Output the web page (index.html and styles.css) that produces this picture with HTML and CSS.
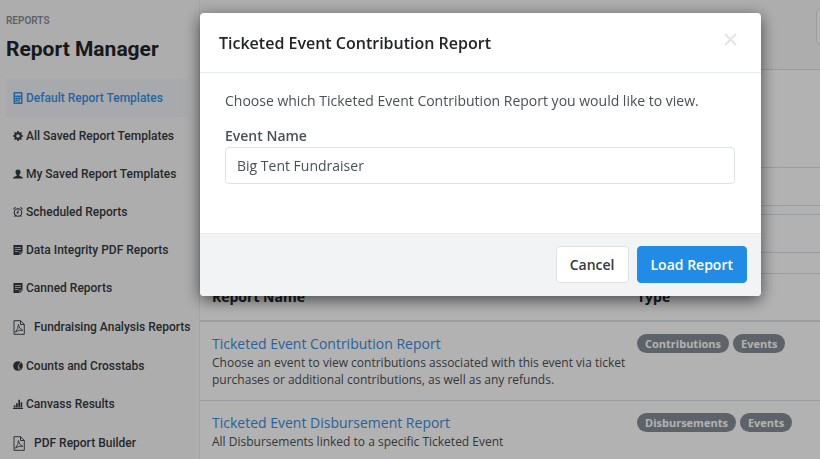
FILE: index.html
```html
<!DOCTYPE html>
<html lang="en">
<head>
    <meta charset="UTF-8">
    <meta name="viewport" content="width=device-width, initial-scale=1.0">
    <title>Report Manager</title>
    <link rel="stylesheet" href="styles.css">
</head>
<body>

    <svg class="sprite" aria-hidden="true">
        <symbol id="icon-pdf" viewBox="0 0 12 15">
            <path d="M1 .7h6.500l3.800 3.800v9.800H1z M7.500 .7v3.800h3.800" fill="none" stroke="currentColor" stroke-width=".9"/>
            <path d="M2.300 12.200Q5.500 9 5.400 4.500Q6 9 9.800 10.300Q6 9.500 2.300 12.200z" fill="none" stroke="currentColor" stroke-width=".8"/>
        </symbol>
        <symbol id="icon-note" viewBox="0 0 10 12">
            <path d="M.5 1h9v7.500L7 11H.5z"/>
            <path d="M2 3.500h6M2 5.500h6M2 7.500h3.500" stroke="#e8e8e8" stroke-width=".8"/>
            <path d="M6.800 11V8.300h2.700" fill="none" stroke="#e8e8e8" stroke-width=".6"/>
        </symbol>
    </svg>

    <div class="page">
        <aside class="sidebar">
            <p class="section">REPORTS</p>
            <h1>Report Manager</h1>
            <nav class="menu">
                <a href="#" class="active">
                    <svg class="icon" viewBox="0 0 10 12"><path fill-rule="evenodd" d="M1.500 0h7q1 0 1 1v10q0 1-1 1h-7q-1 0-1-1V1q0-1 1-1zM2 1.500v2h6v-2zM2 5v1h1.400V5zm2.300 0v1h1.400V5zm2.300 0v1H8V5zM2 7.300v1h1.400v-1zm2.300 0v1h1.400v-1zM2 9.500v1h3.700v-1zM6.600 7.300v3.200H8V7.300z"/></svg>
                    Default Report Templates
                </a>
                <a href="#">
                    <svg class="icon" viewBox="0 0 12 12"><circle cx="6" cy="6" r="3.300" fill="none" stroke="currentColor" stroke-width="2.200"/><path d="M6 0v2.500M6 9.500V12M0 6h2.500M9.500 6H12M1.800 1.800l1.700 1.700M8.500 8.500l1.700 1.700M10.200 1.800L8.500 3.500M3.500 8.500l-1.700 1.700" stroke="currentColor" stroke-width="2"/></svg>
                    All Saved Report Templates
                </a>
                <a href="#">
                    <svg class="icon" viewBox="0 0 12 12"><path d="M6 .5c2 0 3 1.300 3 3C9 5 8.300 6.300 7.500 7v1.200L11 9.500q1 .5 1 2H0q0-1.500 1-2l3.500-1.300V7C3.700 6.300 3 5 3 3.500c0-1.700 1-3 3-3z"/></svg>
                    My Saved Report Templates
                </a>
                <a href="#">
                    <svg class="icon" viewBox="0 0 12 13"><g fill="none" stroke="currentColor" stroke-width="1.300"><circle cx="6" cy="7" r="4.500"/><path d="M6 4.500v3H4.300M.7 3.300Q1.300 1.500 3.300 1.200M11.300 3.300Q10.700 1.500 8.700 1.200M3 10.500l-1 1.700M9 10.500l1 1.700"/></g></svg>
                    Scheduled Reports
                </a>
                <a href="#"><svg class="icon"><use href="#icon-note"/></svg>Data Integrity PDF Reports</a>
                <a href="#"><svg class="icon"><use href="#icon-note"/></svg>Canned Reports</a>
                <a href="#" class="pdf"><svg class="icon"><use href="#icon-pdf"/></svg>Fundraising Analysis Reports</a>
                <a href="#">
                    <svg class="icon" viewBox="0 0 12 12"><circle cx="6" cy="6" r="5.800"/><path d="M6.200 6.300L9.300 1.200M6.200 6.300l3.600 4.200M6.200 6.300L7.200 11" stroke="#f0f0f0" stroke-width=".8"/></svg>
                    Counts and Crosstabs
                </a>
                <a href="#">
                    <svg class="icon" viewBox="0 0 12 12"><path d="M0 10.500h12V12H0zM1 7.500h2V10H1zM3.700 5h2v5h-2zM6.400 1h2v9h-2zM9.100 4h2v6h-2z"/></svg>
                    Canvass Results
                </a>
                <a href="#" class="pdf"><svg class="icon"><use href="#icon-pdf"/></svg>PDF Report Builder</a>
            </nav>
        </aside>

        <main class="content">
            <header class="topbar">
                <button type="button" class="topbar-btn" aria-label="Options"></button>
            </header>
            <div class="filters">
                <input type="text" aria-label="Search reports">
                <input type="text" aria-label="Filter by type">
            </div>
            <table class="reports">
                <thead>
                    <tr><th class="name-col">Report Name</th><th>Type</th></tr>
                </thead>
                <tbody>
                    <tr>
                        <td>
                            <a href="#">Ticketed Event Contribution Report</a>
                            <p>Choose an event to view contributions associated with this event via ticket<br>purchases or additional contributions, as well as any refunds.</p>
                        </td>
                        <td><div class="badges"><span class="badge">Contributions</span><span class="badge">Events</span></div></td>
                    </tr>
                    <tr>
                        <td>
                            <a href="#">Ticketed Event Disbursement Report</a>
                            <p>All Disbursements linked to a specific Ticketed Event</p>
                        </td>
                        <td><div class="badges"><span class="badge">Disbursements</span><span class="badge">Events</span></div></td>
                    </tr>
                </tbody>
            </table>
        </main>
    </div>

    <div class="overlay">
        <form class="modal" role="dialog" aria-labelledby="modalTitle">
            <div class="modal-header">
                <h2 id="modalTitle">Ticketed Event Contribution Report</h2>
                <button type="button" class="close" aria-label="Close">
                    <svg viewBox="0 0 12 12"><path d="M1 1l10 10M11 1L1 11"/></svg>
                </button>
            </div>
            <div class="modal-body">
                <p>Choose which Ticketed Event Contribution Report you would like to view.</p>
                <label for="eventName">Event Name</label>
                <input type="text" id="eventName" value="Big Tent Fundraiser">
            </div>
            <div class="modal-footer">
                <button type="button" class="btn cancel-btn">Cancel</button>
                <button type="button" class="btn load-btn">Load Report</button>
            </div>
        </form>
    </div>

</body>
</html>
```
FILE: styles.css
```css
* {
    box-sizing: border-box;
}
body {
    margin: 0;
    height: 100vh;
    overflow: hidden;
    font-family: "Open Sans", sans-serif;
    font-size: 14px;
    color: #495057;
    background: #f8f8f8;
}
h1, h2, p {
    margin: 0;
}
a {
    text-decoration: none;
}
input, button {
    font-family: inherit;
    font-size: 14px;
}
.sprite {
    display: none;
}
.page {
    display: flex;
    min-height: 100vh;
}
.sidebar {
    flex: 0 0 199px;
    min-width: 0;
    padding: 13px 10px 0 6px;
    font-family: Roboto, sans-serif;
}
.section {
    font-size: 10px;
    font-weight: 600;
    line-height: 16px;
    color: #868e96;
}
h1 {
    font-size: 21px;
    font-weight: 700;
    line-height: 40px;
    color: #212529;
    white-space: nowrap;
}
.menu {
    display: flex;
    flex-direction: column;
    padding-top: 10px;
}
.menu a {
    display: flex;
    align-items: center;
    gap: 3px;
    height: 38px;
    padding-left: 7px;
    font-size: 12px;
    font-weight: 500;
    color: #343a40;
    white-space: nowrap;
}
.menu .active {
    color: #3a90e6;
    background: #f0f3f6;
}
.menu .pdf {
    height: 40px;
    gap: 9px;
}
.icon {
    flex: none;
    width: 10px;
    height: 12px;
    fill: currentColor;
}
.pdf .icon {
    width: 12px;
    height: 15px;
}
.content {
    flex: 1;
    min-width: 0;
    border-left: 1px solid #e9ecef;
    background: #fff;
}
.topbar {
    display: flex;
    justify-content: flex-end;
    height: 70px;
    padding-top: 8px;
    background: #f8f8f8;
    border-bottom: 1px solid #dee2e6;
    overflow: hidden;
}
.topbar-btn {
    flex: none;
    width: 60px;
    height: 37px;
    margin-right: -56px;
    background: #fff;
    border: 1px solid #dee2e6;
    border-radius: 5px;
}
.filters {
    display: flex;
    flex-direction: column;
    gap: 8px;
    padding: 97px 0 20px;
}
.filters input {
    height: 39px;
    border: solid #dee2e6;
    border-width: 1px 0;
}
.reports {
    width: 100%;
    table-layout: fixed;
    border-collapse: collapse;
    border-top: 1px solid #dee2e6;
}
.reports th {
    height: 47px;
    padding: 0 12px;
    text-align: left;
    color: #212529;
    border-bottom: 2px solid #dee2e6;
}
.name-col {
    width: 425px;
}
.reports td {
    padding: 12px;
    vertical-align: top;
    border-bottom: 1px solid #dee2e6;
}
.reports a {
    display: block;
    line-height: 20px;
    color: #3d8cdc;
}
.reports p {
    font-size: 12px;
    line-height: 17px;
    white-space: nowrap;
}
.badges {
    display: flex;
    gap: 4px;
}
.badge {
    padding: 0 8px;
    font-size: 11px;
    font-weight: 700;
    line-height: 19px;
    color: #fff;
    background: #868e96;
    border-radius: 10px;
}
.overlay {
    position: fixed;
    inset: 0;
    padding: 13px 59px 0 200px;
    background: rgba(0, 0, 0, 0.3);
}
.modal {
    background: #fff;
    border-radius: 4px;
    box-shadow: 0 4px 16px rgba(0, 0, 0, 0.6);
}
.modal-header {
    display: flex;
    justify-content: space-between;
    align-items: center;
    height: 60px;
    padding: 0 24px 0 19px;
    border-bottom: 1px solid #e9ecef;
}
h2 {
    font-size: 16px;
    font-weight: 600;
    color: #212529;
}
.close {
    display: flex;
    padding: 0 0 6px;
    background: none;
    border: none;
    cursor: pointer;
}
.close svg {
    width: 13px;
    height: 13px;
    stroke: #e3e5e8;
    stroke-width: 2;
}
.modal-body {
    padding: 17px 26px 49px 25px;
}
.modal-body p {
    padding-bottom: 13px;
    line-height: 22px;
}
.modal-body label {
    display: block;
    font-weight: 600;
    line-height: 22px;
    color: #495057;
}
.modal-body input {
    width: 100%;
    height: 37px;
    padding: 0 11px;
    color: #495057;
    border: 1px solid #dee2e6;
    border-radius: 4px;
}
.modal-footer {
    display: flex;
    justify-content: flex-end;
    gap: 8px;
    padding: 12px 14px 13px;
    background: #f1f3f5;
    border-top: 1px solid #e9ecef;
    border-radius: 0 0 4px 4px;
}
.btn {
    height: 37px;
    padding: 0 13px;
    font-weight: 600;
    border: 1px solid #dee2e6;
    border-radius: 4px;
    cursor: pointer;
}
.cancel-btn {
    color: #343a40;
    background: #fff;
}
.load-btn {
    color: #fff;
    background: #228be6;
    border-color: #228be6;
}
```
